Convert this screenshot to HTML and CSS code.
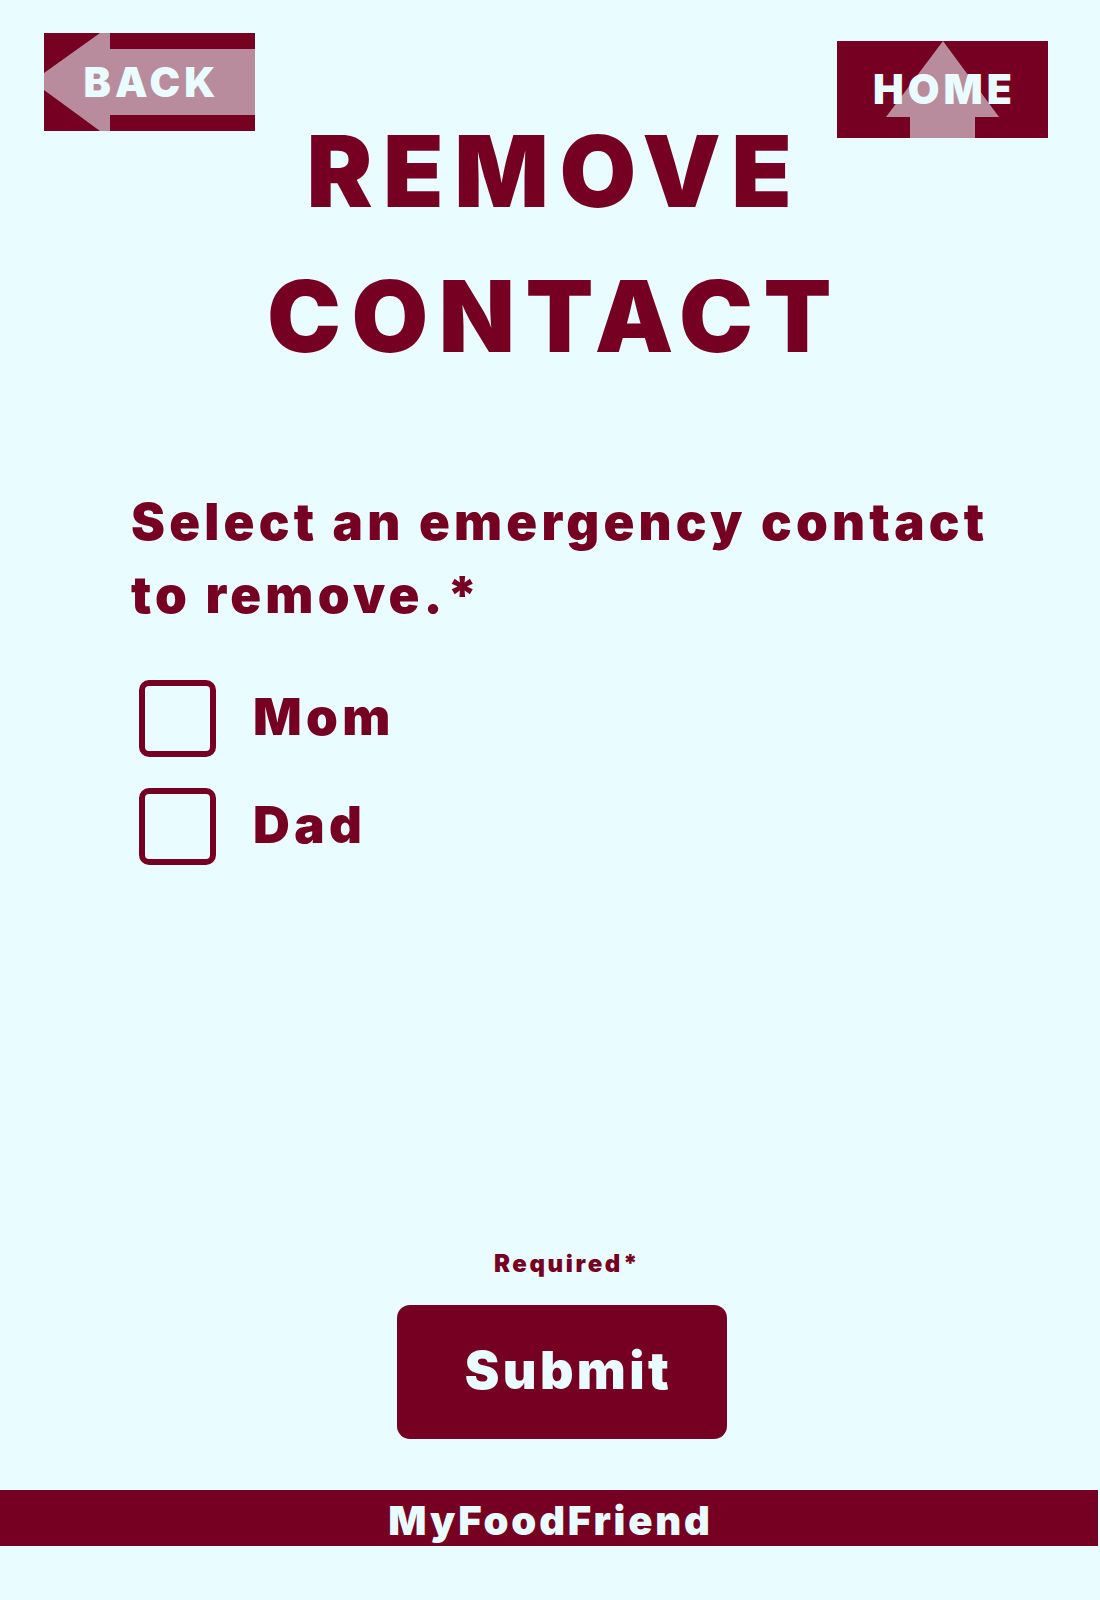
FILE: index.html
```html
<!DOCTYPE html>
<html lang="en">
<head>
<meta charset="utf-8">
<title>Remove Contact</title>
<link rel="stylesheet" href="styles.css">
</head>
<body>
<div class="page">
  <header class="header">
    <a class="nav-btn back" href="#">
      <svg class="nav-art" viewBox="0 0 211 98" width="211" height="98" aria-hidden="true">
        <rect x="0" y="0" width="211" height="98" fill="#750022"/>
        <polygon points="0,40 56,0 66,0 66,16 211,16 211,82 66,82 66,98 56,98 0,57" fill="#b98c9d"/>
      </svg>
      <span class="nav-label">BACK</span>
    </a>
    <h1 class="title">REMOVE<br>CONTACT</h1>
    <a class="nav-btn home" href="#">
      <svg class="nav-art" viewBox="0 0 211 97" width="211" height="97" aria-hidden="true">
        <rect x="0" y="0" width="211" height="97" fill="#750022"/>
        <polygon points="106,0 162,76 138,76 138,97 73,97 73,76 49,76" fill="#b98c9d"/>
      </svg>
      <span class="nav-label">HOME</span>
    </a>
  </header>

  <main class="form">
    <p class="question">Select an emergency contact<br>to remove.*</p>
    <ul class="options">
      <li class="option"><span class="box"></span><span class="opt-label">Mom</span></li>
      <li class="option"><span class="box"></span><span class="opt-label">Dad</span></li>
    </ul>
  </main>

  <section class="actions">
    <p class="required">Required*</p>
    <button class="submit" type="button">Submit</button>
  </section>

  <footer class="footer">MyFoodFriend</footer>
</div>
</body>
</html>
```
FILE: styles.css
```css
html, body {
  margin: 0;
  padding: 0;
  background: #e9fcff;
}
body {
  font-family: "Inter", "Liberation Sans", sans-serif;
  font-weight: 900;
  color: #750022;
  width: 1100px;
  height: 1600px;
}
.page {
  display: flex;
  flex-direction: column;
}
.header {
  display: grid;
  grid-template-columns: 1fr 1fr;
  align-items: start;
}
.nav-btn {
  display: grid;
  text-decoration: none;
  width: 211px;
  grid-row: 1;
  z-index: 1;
}
.nav-btn > * {
  grid-area: 1 / 1;
}
.nav-art {
  display: block;
}
.nav-label {
  align-self: center;
  justify-self: center;
  color: #e9fcff;
  font-size: 41px;
  line-height: 1;
  letter-spacing: 4px;
  padding-left: 4px;
}
.back {
  grid-column: 1;
  justify-self: start;
  margin: 33px 0 0 44px;
}
.home {
  grid-column: 2;
  justify-self: end;
  margin: 41px 52px 0 0;
}
.title {
  grid-column: 1 / -1;
  grid-row: 1;
  margin: 99px 0 0;
  padding-left: 9px;
  font-size: 99px;
  line-height: 145px;
  font-weight: 900;
  text-align: center;
  letter-spacing: 10.5px;
}
.form {
  padding: 96px 0 0 131px;
}
.question {
  margin: 0;
  font-size: 51px;
  line-height: 73px;
  letter-spacing: 4.2px;
}
.options {
  list-style: none;
  margin: 49px 0 0;
  padding: 0 0 0 8px;
  display: flex;
  flex-direction: column;
  gap: 31px;
}
.option {
  display: flex;
  align-items: center;
  gap: 37px;
  height: 77px;
}
.box {
  box-sizing: border-box;
  width: 77px;
  height: 77px;
  border: 6px solid #750022;
  border-radius: 10px;
}
.opt-label {
  font-size: 51px;
  line-height: 1;
  letter-spacing: 4.3px;
  margin-top: -4px;
}
.actions {
  margin-top: 384px;
  padding-left: 24px;
  display: flex;
  flex-direction: column;
  align-items: center;
}
.required {
  margin: 0;
  font-size: 24px;
  line-height: 30px;
  letter-spacing: 2.6px;
  padding-left: 10px;
}
.submit {
  margin-top: 26px;
  width: 330px;
  height: 134px;
  border: 0;
  border-radius: 13px;
  background: #750022;
  color: #e9fcff;
  font-family: inherit;
  font-weight: 900;
  font-size: 52px;
  letter-spacing: 3.4px;
  padding: 0 0 4px 13px;
}
.footer {
  margin-top: 51px;
  height: 56px;
  width: 1098px;
  box-sizing: border-box;
  padding: 5px 0 0 3px;
  background: #750022;
  color: #e9fcff;
  font-size: 40px;
  line-height: 51px;
  text-align: center;
  letter-spacing: 2.8px;
}
```
